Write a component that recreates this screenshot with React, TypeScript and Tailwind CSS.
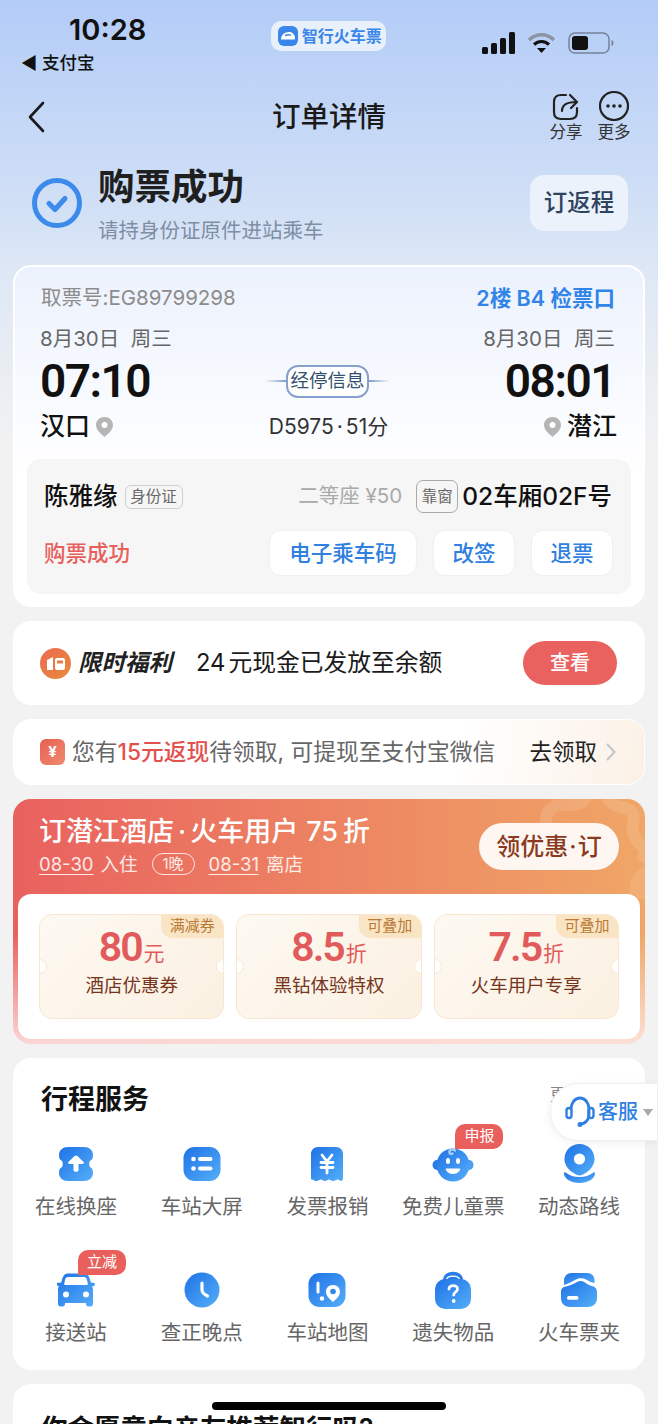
import React from "react";

const G = () => (
  <defs>
    <linearGradient id="bl" x1="0" y1="0" x2="1" y2="1">
      <stop offset="0" stopColor="#1f72e6" />
      <stop offset="1" stopColor="#55aef8" />
    </linearGradient>
  </defs>
);

const IconSeat = () => (
  <svg width="36" height="36" viewBox="0 0 36 36">
    <G />
    <path d="M10 1h16c5 0 9 3 9 8 0 4-1.500 5-3 6-1 .8-1 5 0 6 1.500 1 3 2 3 6 0 5-4 8-9 8H10c-5 0-9-3-9-8 0-4 1.500-5 3-6 1-1 1-5.200 0-6-1.500-1-3-2-3-6 0-5 4-8 9-8z" fill="url(#bl)" />
    <path d="M18 9.500c.6 0 1 .2 1.400.6l6 5.600c1 1 .4 2.300-1 2.300H20.500v6c0 1-1 1.800-2.500 1.800s-2.500-.8-2.500-1.800v-6h-3.900c-1.400 0-2-1.300-1-2.300l6-5.600c.4-.4.800-.6 1.400-.6z" fill="#fff" />
  </svg>
);
const IconScreen = () => (
  <svg width="38" height="36" viewBox="0 0 38 36">
    <G />
    <rect x="0.500" y="1" width="37" height="34" rx="11" fill="url(#bl)" />
    <circle cx="10.500" cy="13" r="2.300" fill="#fff" />
    <circle cx="10.500" cy="22.500" r="2.300" fill="#fff" />
    <rect x="15" y="11" width="14.500" height="4" rx="2" fill="#fff" />
    <rect x="15" y="20.500" width="14.500" height="4" rx="2" fill="#fff" />
  </svg>
);
const IconReceipt = () => (
  <svg width="34" height="36" viewBox="0 0 34 36">
    <G />
    <path d="M8 1h18c4 0 7 3 7 7v24c0 2-1 3-2 3s-2-1.500-3.500-1.500S25 35 23 35s-2.500-1.500-4-1.500-2 1.500-4 1.500-2.500-1.500-4-1.500S8.500 35 6 35c-2 0-2.500-1.500-3.500-1.500S1 34 1 32V8c0-4 3-7 7-7z" fill="url(#bl)" />
    <path d="M12 9l5 6.500L22 9M11 16.500h12M11 21.500h12M17 15.500V27" stroke="#fff" strokeWidth="2.800" fill="none" strokeLinecap="round" />
  </svg>
);
const IconBaby = () => (
  <svg width="44" height="36" viewBox="0 0 44 36">
    <G />
    <ellipse cx="6" cy="19" rx="4.500" ry="5" fill="#2a7ce8" />
    <ellipse cx="38" cy="19" rx="4.500" ry="5" fill="#4a9ef4" />
    <circle cx="22" cy="19" r="16.500" fill="url(#bl)" />
    <ellipse cx="17" cy="15" rx="2" ry="3" fill="#fff" />
    <ellipse cx="27" cy="15" rx="2" ry="3" fill="#fff" />
    <path d="M15.500 22.500h13c.8 0 1 .8.600 1.500-2 3-4.500 4-7.100 4s-5-1-7.100-4c-.4-.7-.2-1.500.6-1.500z" fill="#fff" />
    <path d="M24 4.500c-2.500-2-6-1-5.500 2 .2 1.500 2 2 3 1" stroke="#a9cbf6" strokeWidth="2.400" fill="none" strokeLinecap="round" />
  </svg>
);
const IconPin = () => (
  <svg width="33" height="40" viewBox="0 0 33 40">
    <G />
    <path d="M1 29.500c0-1 1-1.500 1.800-.8C6.500 31.500 11 33 16.500 33s10-1.500 13.700-4.300c.8-.7 1.800-.2 1.800.8 0 5-7 9.500-15.500 9.500S1 34.500 1 29.500z" fill="url(#bl)" />
    <path d="M16.500 0C25 0 31.500 6.500 31.500 15c0 6-4 11-9 14-2.500 1.500-4 2.500-6 2.500s-3.500-1-6-2.500c-5-3-9-8-9-14C1.500 6.500 8 0 16.500 0z" fill="url(#bl)" />
    <circle cx="16.500" cy="15" r="5.600" fill="#fff" />
  </svg>
);
const IconCar = () => (
  <svg width="38" height="34" viewBox="0 0 38 34">
    <G />
    <path d="M11 0.500h16c3 0 4.500 2 5.500 4.500l1.300 4.500 2.700.2c1 .1 1.500.8 1.300 1.600l-.4 1.700-2.400.5c.6 1 1 2 1 3.500V31c0 1.600-1 2.500-2.500 2.500h-2c-1.500 0-2.500-1-2.500-2.500v-1H8v1c0 1.500-1 2.500-2.500 2.500h-2C2 33.500 1 32.600 1 31V16.500c0-1.500.4-2.500 1-3.500l-2.400-.5-.4-1.700C-.4 10 .1 9.800 1.500 9.700l2.700-.2L5.500 5C6.500 2.500 8 .5 11 .5z" fill="url(#bl)" />
    <path d="M11 4h16c1.500 0 2.500 1 2.800 2.200l1 4.300c.2 1-.4 1.500-1.300 1.500h-21c-.9 0-1.500-.5-1.300-1.500l1-4.300C8.500 5 9.500 4 11 4z" fill="#fff" />
    <circle cx="9" cy="21.500" r="3" fill="#fff" />
    <circle cx="29" cy="21.500" r="3" fill="#fff" />
  </svg>
);
const IconClock = () => (
  <svg width="36" height="36" viewBox="0 0 36 36">
    <G />
    <circle cx="18" cy="18" r="17.500" fill="url(#bl)" />
    <path d="M18 11v7c0 2.500 1.500 4 5.500 6" stroke="#fff" strokeWidth="3.200" fill="none" strokeLinecap="round" />
  </svg>
);
const IconMap = () => (
  <svg width="38" height="36" viewBox="0 0 38 36">
    <G />
    <rect x="0.500" y="1" width="37" height="34" rx="11" fill="url(#bl)" />
    <path d="M10 11v9" stroke="#fff" strokeWidth="3" strokeLinecap="round" />
    <circle cx="14" cy="26.500" r="2.200" fill="#fff" />
    <path d="M25 13c4.500 0 7 3 7 6.500 0 5-4 7.500-7 10.500-3-3-7-5.500-7-10.500 0-3.500 2.500-6.500 7-6.500z" fill="#fff" />
    <circle cx="25" cy="19.500" r="2.800" fill="#2f86ec" />
  </svg>
);
const IconBag = () => (
  <svg width="38" height="38" viewBox="0 0 38 38">
    <G />
    <path d="M9 9c0-11 20-11 20 0v1H9z" fill="#2a7ce8" />
    <path d="M12.500 8.500c1-4.500 12-4.500 13 0" stroke="#fff" strokeWidth="1.400" fill="none" />
    <rect x="1" y="8" width="36" height="30" rx="10" fill="url(#bl)" />
    <path d="M15 18c0-4.500 8.500-4.500 8.500 0 0 3-3.800 3-3.800 6" stroke="#fff" strokeWidth="2.800" fill="none" strokeLinecap="round" />
    <circle cx="19.700" cy="30" r="1.900" fill="#fff" />
  </svg>
);
const IconFolder = () => (
  <svg width="38" height="36" viewBox="0 0 38 36">
    <G />
    <path d="M4 13V9c0-4.500 3-8 8-8h15c4.500 0 7.500 3 7.500 7v3c-3.500-.5-6-2-8.500-3.500C23 6 20 5.500 16 7.500c-3 1.500-7 4-12 5.500z" fill="url(#bl)" />
    <path d="M1 20c0-3.500 2-5 5-5.500 5-1 8-3 11-4.500 3-1.500 5-1.500 8 .5 2.500 1.800 4.500 3 7 3.500 3 .6 5 2.500 5 6V26c0 5.500-3.500 9-9 9H10c-5.500 0-9-3.500-9-9z" fill="url(#bl)" />
    <rect x="7" y="24" width="11.500" height="3.800" rx="1.900" fill="#fff" />
  </svg>
);

function Service({ icon, label, tag }: { icon: React.ReactNode; label: string; tag?: string }) {
  return (
    <div className="flex flex-col items-center">
      <div className="relative flex h-[40px] w-full items-center justify-center">
        {icon}
        {tag ? (
          <span className="absolute top-[-20px] left-[65px] flex h-[25px] w-[48px] items-center justify-center rounded-[10px] rounded-bl-none bg-[#e85f5b] text-[15px] text-white">
            {tag}
          </span>
        ) : null}
      </div>
      <span className="mt-[7px] text-[20.500px] leading-[32px] whitespace-nowrap text-[#666]">{label}</span>
    </div>
  );
}

function Coupon({ value, unit, label, tag }: { value: string; unit: string; label: string; tag: string }) {
  return (
    <div className="relative h-[105px] overflow-hidden rounded-[13px] border border-[#f8e6d0] bg-[linear-gradient(135deg,#fdf9f2,#fbf0e1)]">
      <span className="absolute top-0 right-0 flex h-[23px] w-[62px] items-center justify-center rounded-bl-[12px] bg-[#f9e4c4] text-[15px] text-[#b97a35]">
        {tag}
      </span>
      <span className="absolute top-[44px] left-[-8px] h-[15px] w-[15px] rounded-full border border-[#f8e6d0] bg-white" />
      <span className="absolute top-[44px] right-[-8px] h-[15px] w-[15px] rounded-full border border-[#f8e6d0] bg-white" />
      <div className="mt-[9px] flex h-[46px] items-baseline justify-center font-['Roboto','Noto_Sans_CJK_SC',sans-serif] text-[#e25b5c]">
        <span className="text-[41px] leading-[46px] font-semibold tracking-[-2px]">{value}</span>
        <span className="ml-[2px] text-[21px] leading-[46px]">{unit}</span>
      </div>
      <div className="text-center text-[18.500px] leading-[30px] text-[#77351d]">{label}</div>
    </div>
  );
}

export default function App() {
  return (
    <div className="relative h-[1424px] w-[658px] overflow-hidden bg-[linear-gradient(180deg,#b3ccf7_0px,#cbdcf6_170px,#dfe8f5_280px,#f2f2f2_450px)] font-['Inter','Noto_Sans_CJK_SC',sans-serif] text-[#111]">
      {/* status bar */}
      <div className="flex h-[82px] items-start justify-between pr-[44px] pl-[21px]">
        <div className="flex flex-col">
          <span className="mt-[13px] pl-[48px] text-[29px] leading-[34px] font-semibold">10:28</span>
          <span className="mt-[3px] text-[17.500px] leading-[26px] font-medium">◀ 支付宝</span>
        </div>
        <div className="mt-[21px] ml-[28px] flex h-[30px] w-[115px] items-center gap-[4px] rounded-[10px] bg-[#e8f0fc] pl-[7px]">
          <svg width="20" height="20" viewBox="0 0 20 20">
            <rect width="20" height="20" rx="6" fill="#3a86ea" />
            <path d="M3 13.500c0-4.500 3.500-7.500 8-7.500 3 0 5.500 2 6 5.500v1c0 .6-.4 1-1 1z" fill="#fff" />
            <path d="M7 10c1.500-1.300 4-1.500 6-.5M5 15h10" stroke="#3a86ea" strokeWidth="1.300" fill="none" />
          </svg>
          <span className="text-[16px] leading-[20px] font-semibold whitespace-nowrap text-[#3a86ea]">智行火车票</span>
        </div>
        <div className="mt-[32px] flex items-center gap-[13px]">
          <svg width="33" height="22" viewBox="0 0 33 22" fill="#111">
            <rect x="0" y="15" width="6" height="7" rx="1.500" />
            <rect x="9" y="11" width="6" height="11" rx="1.500" />
            <rect x="18" y="6" width="6" height="16" rx="1.500" />
            <rect x="27" y="0" width="6" height="22" rx="1.500" />
          </svg>
          <svg width="27" height="22" viewBox="0 0 27 22">
            <path d="M1 8c7-7 18-7 25 0" stroke="#8b95a3" strokeWidth="3.400" fill="none" />
            <path d="M6 12.500c4.500-4 10.500-4 15 0" stroke="#111" strokeWidth="3.200" fill="none" />
            <path d="M9 16h9l-4.500 5z" fill="#111" />
          </svg>
          <svg width="46" height="22" viewBox="0 0 46 22">
            <rect x="1" y="1" width="40" height="20" rx="6" fill="none" stroke="#76839a" strokeWidth="1.500" />
            <rect x="4" y="4" width="16" height="14" rx="3" fill="#111" />
            <path d="M43.500 8v6c1.500-.5 2-1.500 2-3s-.5-2.500-2-3z" fill="#76839a" />
          </svg>
        </div>
      </div>

      {/* nav */}
      <div className="relative flex h-[70px] items-start justify-between pr-[27px] pl-[27px]">
        <svg className="mt-[19px]" width="18" height="32" viewBox="0 0 18 32">
          <path d="M16 2L3 16l13 14" stroke="#1a1a1a" strokeWidth="2.600" fill="none" strokeLinecap="round" strokeLinejoin="round" />
        </svg>
        <span className="absolute top-[15px] left-0 w-full text-center text-[28.500px] leading-[40px] font-medium text-[#1a1a1a]">订单详情</span>
        <div className="relative z-10 flex gap-[14px]">
          <div className="flex w-[34px] flex-col items-center">
            <svg className="mt-[9px]" width="28" height="30" viewBox="0 0 28 30">
              <path d="M14 4H9C4.500 4 2 6.500 2 11v10c0 4.500 2.500 7 7 7h9c4.500 0 7-2.500 7-7v-4" stroke="#222" strokeWidth="2.200" fill="none" strokeLinecap="round" />
              <path d="M10 20c0-6 4-9 14-9M18 4l7 7-6 6" stroke="#222" strokeWidth="2.200" fill="none" strokeLinecap="round" strokeLinejoin="round" />
            </svg>
            <span className="text-[16.500px] leading-[22px] whitespace-nowrap text-[#333]">分享</span>
          </div>
          <div className="flex w-[34px] flex-col items-center">
            <svg className="mt-[9px]" width="30" height="30" viewBox="0 0 30 30">
              <circle cx="15" cy="15" r="14" stroke="#222" strokeWidth="2.200" fill="none" />
              <circle cx="9" cy="15" r="1.800" fill="#222" />
              <circle cx="15" cy="15" r="1.800" fill="#222" />
              <circle cx="21" cy="15" r="1.800" fill="#222" />
            </svg>
            <span className="text-[16.500px] leading-[22px] whitespace-nowrap text-[#333]">更多</span>
          </div>
        </div>
      </div>

      {/* status */}
      <div className="flex h-[113px] items-start justify-between pr-[30px] pl-[32px]">
        <div className="flex">
          <svg className="mt-[26px]" width="50" height="50" viewBox="0 0 50 50">
            <circle cx="25" cy="25" r="22.500" stroke="#3c8aec" strokeWidth="5" fill="none" />
            <path d="M17 25.500l6 6 10-11" stroke="#3c8aec" strokeWidth="5" fill="none" strokeLinecap="round" strokeLinejoin="round" />
          </svg>
          <div className="ml-[16px] flex flex-col">
            <span className="mt-[9px] text-[36.500px] leading-[52px] font-semibold text-[#1f1f1f]">购票成功</span>
            <span className="mt-[3px] text-[20.500px] leading-[30px] text-[#7e8ea5]">请持身份证原件进站乘车</span>
          </div>
        </div>
        <button className="mt-[23px] h-[56px] w-[98px] rounded-[14px] bg-[#ecf2fc] text-[23.500px] font-medium text-[#2e4360]">订返程</button>
      </div>

      <div className="flex flex-col gap-[14px] px-[13px]">
        {/* ticket card */}
        <div className="h-[342px] rounded-[18px] border-2 border-white bg-[linear-gradient(180deg,#ecf2fd_0%,#ffffff_62%)] px-[12px]">
          <div className="flex h-[58px] items-center justify-between pt-[5px] pr-[16px] pl-[14px]">
            <span className="text-[20.500px] text-[#8c8c8c]">取票号:EG89799298</span>
            <span className="text-[21.500px] font-semibold text-[#3184e8]">2楼 B4 检票口</span>
          </div>
          <div className="flex justify-between pr-[16px] pl-[13px] text-[20.500px] leading-[28px] text-[#666]">
            <span>8月30日&nbsp;&nbsp;周三</span>
            <span>8月30日&nbsp;&nbsp;周三</span>
          </div>
          <div className="flex h-[56px] items-center justify-between pr-[16px] pl-[13px] font-['Roboto','Noto_Sans_CJK_SC',sans-serif]">
            <span className="w-[112px] text-[46px] leading-[56px] font-semibold tracking-[-1.500px]">07:10</span>
            <div className="flex items-center font-['Inter','Noto_Sans_CJK_SC',sans-serif]">
              <span className="h-[2px] w-[21px] bg-[linear-gradient(90deg,transparent,#7f9cc8)]" />
              <span className="flex h-[33px] w-[83px] items-center justify-center rounded-[12px] border-2 border-[#86a2cc] bg-white text-[18.500px] text-[#34506f]">经停信息</span>
              <span className="h-[2px] w-[21px] bg-[linear-gradient(90deg,#7f9cc8,transparent)]" />
            </div>
            <span className="w-[112px] text-right text-[46px] leading-[56px] font-semibold tracking-[-1.500px]">08:01</span>
          </div>
          <div className="flex h-[36px] items-center justify-between pr-[14px] pl-[13px]">
            <span className="flex w-[150px] items-center gap-[6px] text-[25px] font-medium">
              汉口
              <svg width="17" height="20" viewBox="0 0 17 20"><path d="M8.500 0C13 0 17 3.500 17 8c0 5-5 9-8.500 12C5 17 0 13 0 8 0 3.500 4 0 8.500 0z" fill="#b5b5b5" /><circle cx="8.500" cy="8" r="3" fill="#fff" /></svg>
            </span>
            <span className="text-[21px] text-[#333]">D5975<span className="px-[3px]">·</span>51分</span>
            <span className="flex w-[150px] items-center justify-end gap-[6px] text-[25px] font-medium">
              <svg width="17" height="20" viewBox="0 0 17 20"><path d="M8.500 0C13 0 17 3.500 17 8c0 5-5 9-8.500 12C5 17 0 13 0 8 0 3.500 4 0 8.500 0z" fill="#b5b5b5" /><circle cx="8.500" cy="8" r="3" fill="#fff" /></svg>
              潜江
            </span>
          </div>

          <div className="mt-[14px] h-[135px] rounded-[14px] bg-[#f6f6f7] pr-[18px] pl-[17px]">
            <div className="flex h-[71px] items-center pt-[4px]">
              <span className="text-[24.500px] font-medium">陈雅缘</span>
              <span className="ml-[7px] flex h-[24px] w-[58px] items-center justify-center rounded-[6px] border border-[#cfcfcf] text-[15.500px] text-[#666]">身份证</span>
              <span className="ml-auto text-[20.500px] text-[#aaa]">二等座 ¥50</span>
              <span className="ml-[14px] flex h-[33px] w-[42px] items-center justify-center rounded-[7px] border border-[#aaa] text-[15.500px] text-[#666]">靠窗</span>
              <span className="mr-[1px] ml-[4px] text-[24.500px] font-medium whitespace-nowrap">02车厢02F号</span>
            </div>
            <div className="flex items-center">
              <span className="text-[21.500px] font-medium text-[#e8605b]">购票成功</span>
              <button className="ml-auto h-[46px] w-[148px] rounded-[12px] border border-[#eef0f5] bg-white text-[21.500px] font-medium text-[#2f80e0]">电子乘车码</button>
              <button className="ml-[16px] h-[46px] w-[82px] rounded-[12px] border border-[#eef0f5] bg-white text-[21.500px] font-medium text-[#2f80e0]">改签</button>
              <button className="ml-[16px] h-[46px] w-[82px] rounded-[12px] border border-[#eef0f5] bg-white text-[21.500px] font-medium text-[#2f80e0]">退票</button>
            </div>
          </div>
        </div>

        {/* welfare */}
        <div className="flex h-[84px] items-center rounded-[18px] bg-white pr-[28px] pl-[27px]">
          <span className="flex h-[31px] w-[31px] items-center justify-center rounded-full bg-[linear-gradient(135deg,#ec6a52,#e98a3a)]">
            <svg width="20" height="18" viewBox="0 0 20 18" fill="#fff">
              <path d="M1 6l6-3v13H1z" />
              <rect x="9" y="4" width="10" height="12" rx="2" />
              <rect x="11" y="6.500" width="6" height="3" fill="#e97a48" />
            </svg>
          </span>
          <span className="ml-[7px] text-[23.500px] font-bold text-[#222] italic">限时福利</span>
          <span className="ml-[24px] text-[23.750px] text-[#1a1a1a]">24<span className="ml-[3px]">元现金已发放至余额</span></span>
          <button className="ml-auto h-[44px] w-[94px] rounded-full bg-[#e9625f] text-[20px] font-medium text-white">查看</button>
        </div>

        {/* cash */}
        <div className="flex h-[66px] items-center rounded-[18px] border border-white bg-[linear-gradient(100deg,#ffffff_70%,#fbf1e6_100%)] pr-[28px] pl-[26px]">
          <span className="flex h-[26px] w-[25px] items-center justify-center rounded-[6px] bg-[linear-gradient(135deg,#e85f52,#f08a70)] text-[15px] font-bold text-white">¥</span>
          <span className="ml-[7px] text-[22.750px] whitespace-nowrap text-[#666]">
            您有<span className="font-medium text-[#e2514e]">15元返现</span>待领取, 可提现至支付宝微信
          </span>
          <span className="ml-auto text-[22.500px] whitespace-nowrap text-[#222]">去领取</span>
          <svg className="ml-[9px]" width="10" height="18" viewBox="0 0 10 18">
            <path d="M1.500 1.500L8.500 9l-7 7.500" stroke="#c4c4c4" strokeWidth="2" fill="none" strokeLinecap="round" strokeLinejoin="round" />
          </svg>
        </div>

        {/* hotel */}
        <div className="relative h-[245px] overflow-hidden rounded-[18px] bg-[linear-gradient(180deg,rgba(255,255,255,0)_55%,rgba(255,235,235,0.85)_100%),linear-gradient(90deg,#e9615f,#f0a666)] px-[5px]">
          <svg className="absolute top-0 right-0" width="120" height="100" viewBox="0 0 120 100" fill="none">
            <path d="M21 70V22Q21 8 36 6H48Q58 6 62-4M82-4Q84 6 96 8Q112 10 108 26Q106 36 114 44Q124 52 116 62" stroke="#fff" strokeOpacity="0.12" strokeWidth="12" />
            <path d="M120 66Q100 78 106 100H120z" fill="#fff" fillOpacity="0.1" />
          </svg>
          <div className="relative flex h-[95px] justify-between pr-[21px] pl-[21px]">
            <div>
              <div className="mt-[15px] text-[27px] leading-[36px] font-medium whitespace-nowrap text-white">
                订潜江酒店<span className="px-[4px]">·</span>火车用户<span className="pr-[5px] pl-[8px]">75</span>折
              </div>
              <div className="mt-[1px] flex items-center text-[18.500px] leading-[26px] text-white/85">
                <span className="underline underline-offset-[3px]">08-30</span>
                <span className="ml-[7px]">入住</span>
                <span className="mx-[14px] flex h-[22px] w-[43px] items-center justify-center rounded-full border border-white/80 text-[15px]">1晚</span>
                <span className="underline underline-offset-[3px]">08-31</span>
                <span className="ml-[7px]">离店</span>
              </div>
            </div>
            <button className="mt-[24px] h-[47px] w-[140px] rounded-full bg-[#fdf6f1] text-[24px] font-medium whitespace-nowrap text-[#8a3a20]">领优惠<span className="px-[1px]">·</span>订</button>
          </div>
          <div className="grid h-[145px] grid-cols-3 gap-[12px] rounded-[13px] bg-white px-[21px] pt-[20px]">
            <Coupon value="80" unit="元" label="酒店优惠券" tag="满减券" />
            <Coupon value="8.5" unit="折" label="黑钻体验特权" tag="可叠加" />
            <Coupon value="7.5" unit="折" label="火车用户专享" tag="可叠加" />
          </div>
        </div>

        {/* services */}
        <div className="h-[312px] rounded-[18px] bg-white">
          <div className="flex h-[62px] items-end justify-between pr-[63px] pl-[28px]">
            <span className="text-[27px] leading-[40px] font-semibold text-[#111]">行程服务</span>
            <span className="mb-[6px] text-[16px] leading-[40px] text-[#888]">更多</span>
          </div>
          <div className="mt-[24px] grid grid-cols-5 gap-y-[47px] pr-[3px]">
            <Service icon={<IconSeat />} label="在线换座" />
            <Service icon={<IconScreen />} label="车站大屏" />
            <Service icon={<IconReceipt />} label="发票报销" />
            <Service icon={<IconBaby />} label="免费儿童票" tag="申报" />
            <Service icon={<IconPin />} label="动态路线" />
            <Service icon={<IconCar />} label="接送站" tag="立减" />
            <Service icon={<IconClock />} label="查正晚点" />
            <Service icon={<IconMap />} label="车站地图" />
            <Service icon={<IconBag />} label="遗失物品" />
            <Service icon={<IconFolder />} label="火车票夹" />
          </div>
        </div>

        {/* recommend */}
        <div className="h-[80px] rounded-t-[18px] bg-white pt-[25px] pl-[28px]">
          <span className="text-[26.500px] leading-[38px] font-semibold whitespace-nowrap text-[#111]">你会愿意向亲友推荐智行吗?</span>
        </div>
      </div>

      {/* floating customer service */}
      <div className="absolute top-[1083px] right-0 flex h-[58px] w-[108px] items-center rounded-l-[28px] border border-[#eef0f4] bg-white pl-[14px] shadow-[0_2px_10px_rgba(0,0,0,0.06)]">
        <svg width="30" height="34" viewBox="0 0 30 34" fill="none">
          <path d="M6 14c0-6 4-11 9-11s9 5 9 11v5c0 6-4 10-9 10" stroke="#2f80e0" strokeWidth="2.800" strokeLinecap="round" />
          <rect x="1.500" y="13" width="5" height="10" rx="2.500" stroke="#2f80e0" strokeWidth="2.400" />
          <rect x="23.500" y="13" width="5" height="10" rx="2.500" stroke="#2f80e0" strokeWidth="2.400" />
          <circle cx="15" cy="29.500" r="2.500" fill="#2f80e0" />
        </svg>
        <span className="ml-[3px] text-[20px] font-medium whitespace-nowrap text-[#2f80e0]">客服</span>
        <svg className="ml-[5px]" width="10" height="7" viewBox="0 0 10 7"><path d="M0 0h10L5 7z" fill="#a9a9a9" /></svg>
      </div>

      {/* home indicator */}
      <div className="absolute top-[1402px] left-[212px] h-[8px] w-[234px] rounded-full bg-black" />
    </div>
  );
}
